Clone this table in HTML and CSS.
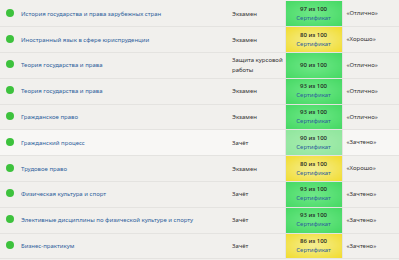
FILE: index.html
```html
<!DOCTYPE html>
<html lang="ru">
<head>
    <meta charset="UTF-8">
    <title>Оценки</title>
    <link rel="stylesheet" href="styles.css">
</head>
<body>
    <table class="grades">
        <colgroup>
            <col class="col-name">
            <col class="col-type">
            <col class="col-score">
            <col class="col-result">
        </colgroup>
        <tr>
            <td class="name"><span class="dot"></span><a href="#">История государства и права зарубежных стран</a></td>
            <td class="type">Экзамен</td>
            <td class="score green"><b>97 из 100</b><a href="#">Сертификат</a></td>
            <td class="result">«Отлично»</td>
        </tr>
        <tr>
            <td class="name"><span class="dot"></span><a href="#">Иностранный язык в сфере юриспруденции</a></td>
            <td class="type">Экзамен</td>
            <td class="score yellow"><b>80 из 100</b><a href="#">Сертификат</a></td>
            <td class="result">«Хорошо»</td>
        </tr>
        <tr>
            <td class="name"><span class="dot"></span><a href="#">Теория государства и права</a></td>
            <td class="type">Защита курсовой работы</td>
            <td class="score green"><b>90 из 100</b></td>
            <td class="result">«Отлично»</td>
        </tr>
        <tr>
            <td class="name"><span class="dot"></span><a href="#">Теория государства и права</a></td>
            <td class="type">Экзамен</td>
            <td class="score green"><b>93 из 100</b><a href="#">Сертификат</a></td>
            <td class="result">«Отлично»</td>
        </tr>
        <tr>
            <td class="name"><span class="dot"></span><a href="#">Гражданское право</a></td>
            <td class="type">Экзамен</td>
            <td class="score green"><b>93 из 100</b><a href="#">Сертификат</a></td>
            <td class="result">«Отлично»</td>
        </tr>
        <tr class="active">
            <td class="name"><span class="dot"></span><a href="#">Гражданский процесс</a></td>
            <td class="type">Зачёт</td>
            <td class="score light"><b>90 из 100</b><a href="#">Сертификат</a></td>
            <td class="result">«Зачтено»</td>
        </tr>
        <tr>
            <td class="name"><span class="dot"></span><a href="#">Трудовое право</a></td>
            <td class="type">Экзамен</td>
            <td class="score yellow"><b>80 из 100</b><a href="#">Сертификат</a></td>
            <td class="result">«Хорошо»</td>
        </tr>
        <tr>
            <td class="name"><span class="dot"></span><a href="#">Физическая культура и спорт</a></td>
            <td class="type">Зачёт</td>
            <td class="score green"><b>93 из 100</b><a href="#">Сертификат</a></td>
            <td class="result">«Зачтено»</td>
        </tr>
        <tr>
            <td class="name"><span class="dot"></span><a href="#">Элективные дисциплины по физической культуре и спорту</a></td>
            <td class="type">Зачёт</td>
            <td class="score green"><b>93 из 100</b><a href="#">Сертификат</a></td>
            <td class="result">«Зачтено»</td>
        </tr>
        <tr>
            <td class="name"><span class="dot"></span><a href="#">Бизнес-практикум</a></td>
            <td class="type">Зачёт</td>
            <td class="score yellow"><b>86 из 100</b><a href="#">Сертификат</a></td>
            <td class="result">«Зачтено»</td>
        </tr>
    </table>
</body>
</html>
```

FILE: styles.css
```css
* {
    box-sizing: border-box;
}

body {
    margin: 0;
    background-color: #f1f0ed;
    font-family: "Noto Sans", "Open Sans", sans-serif;
    font-size: 6px;
    color: #333;
}

.grades {
    width: 399px;
    border-collapse: collapse;
    table-layout: fixed;
    margin-top: 1px;
}

.col-name {
    width: 225px;
}

.col-type {
    width: 60px;
}

.col-score {
    width: 57px;
}

.col-result {
    width: 57px;
}

.grades tr {
    height: 25.8px;
    border-bottom: 1px solid #e4e3e0;
}

.grades tr.active {
    background-color: #f8f7f5;
}

.grades td {
    padding: 0;
    vertical-align: middle;
    line-height: 9px;
}

.name {
    padding-left: 6px !important;
    white-space: nowrap;
}

.name a {
    color: #2d5f9c;
    text-decoration: none;
}

.dot {
    display: inline-block;
    width: 8px;
    height: 8px;
    border-radius: 50%;
    background-color: #3dc23d;
    vertical-align: -1px;
    margin-right: 7px;
}

.type {
    padding-left: 7px !important;
    line-height: 10px !important;
}

.score {
    text-align: center;
    border-left: 1px solid #e4e3e0;
    border-right: 1px solid #e4e3e0;
}

.score b {
    display: block;
    font-weight: 500;
    color: #222;
}

.score a {
    display: block;
    color: #2d5f9c;
    text-decoration: none;
}

.green {
    background: radial-gradient(ellipse at center, #6fe888 0%, #45d863 100%);
}

.yellow {
    background: radial-gradient(ellipse at center, #f3ee95 0%, #f2dc2e 100%);
}

.light {
    background: radial-gradient(ellipse at center, #a7ecb0 0%, #90e69d 100%);
}

.result {
    padding-left: 4px !important;
}
```
